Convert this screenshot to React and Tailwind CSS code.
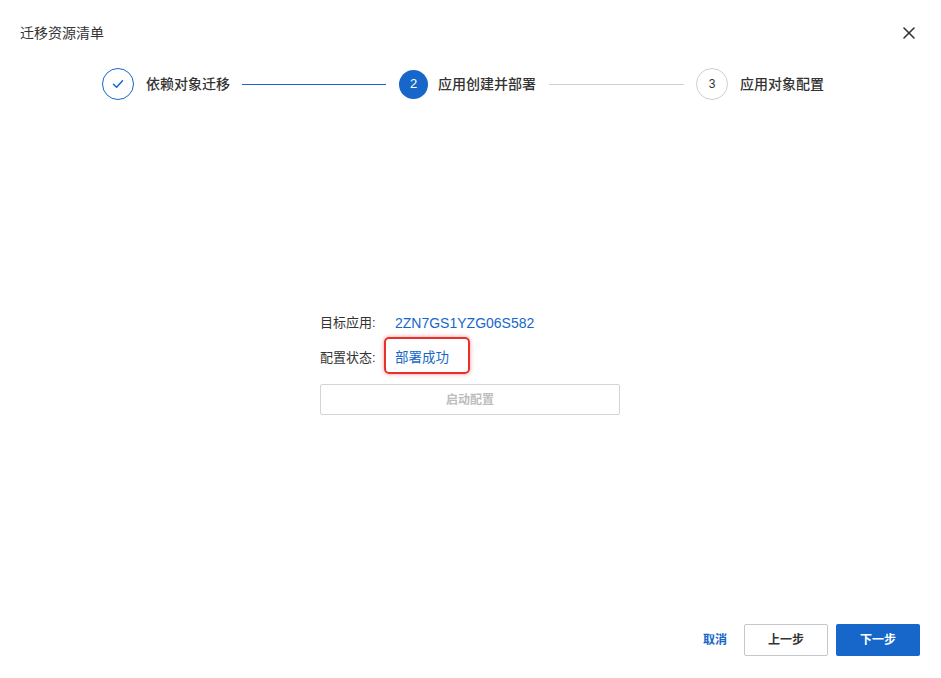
import React from "react";

const BLUE = "#1667c9";

export default function App() {
  return (
    <div
      className="w-[941px] h-[678px] bg-white flex flex-col text-[#333]"
      style={{ fontFamily: '"Liberation Sans", "Noto Sans CJK SC", sans-serif' }}
    >
      {/* header */}
      <div className="pt-[23px] pl-5 pr-[22px] flex items-center justify-between h-[43px]">
        <div className="text-[14px] leading-5">迁移资源清单</div>
        <svg width="20" height="20" viewBox="0 0 24 24" fill="none" stroke="#333" strokeWidth="1.9" strokeLinecap="round">
          <path d="M18 6 6 18" />
          <path d="M6 6l12 12" />
        </svg>
      </div>

      {/* steps */}
      <div className="mt-[25px] pl-[102px] flex items-center h-8">
        <div className="w-8 h-8 rounded-full border border-[#1667c9] flex items-center justify-center">
          <svg width="12" height="10" viewBox="0 0 12 10" fill="none" stroke={BLUE} strokeWidth="1.5" strokeLinecap="round" strokeLinejoin="round">
            <path d="M1.5 5.2 4.6 8.2 10.5 1.8" />
          </svg>
        </div>
        <div className="ml-3 text-[14px] font-medium leading-5">依赖对象迁移</div>
        <div className="ml-3 w-[144px] h-px bg-[#1667c9]" />
        <div className="ml-[13px] w-[29px] h-[29px] rounded-full bg-[#1667c9] flex items-center justify-center text-white text-[13px]">2</div>
        <div className="ml-[10px] text-[14px] font-medium leading-5">应用创建并部署</div>
        <div className="ml-[13px] w-[135px] h-px bg-[#cfcfcf]" />
        <div className="ml-3 w-8 h-8 rounded-full border border-[#cfcfcf] flex items-center justify-center text-[#333] text-[12px]">3</div>
        <div className="ml-3 text-[14px] font-medium leading-5">应用对象配置</div>
      </div>

      {/* content */}
      <div className="flex-1">
        <div className="mt-[213px] ml-[320px] w-[300px] text-[13px]">
          <div className="flex items-center h-5 leading-5">
            <div className="w-[75px]">目标应用:</div>
            <div className="text-[#1667c9] text-[14px]">2ZN7GS1YZG06S582</div>
          </div>
          <div className="flex items-center h-5 leading-5 mt-[15px]">
            <div className="w-[75px]">配置状态:</div>
            <div className="relative text-[#1667c9] text-[13.5px]">
              部署成功
              <div className="absolute left-[-11px] top-[-11px] w-[86px] h-[37px] border-2 border-[#e8312c] rounded-[5px] shadow-[0_0_4px_rgba(232,49,44,0.5)]" />
            </div>
          </div>
          <div className="mt-4 h-[31px] border border-[#d4d4d4] rounded-[2px] bg-white flex items-center justify-center text-[12px] font-bold text-[#bdbdbd]">
            启动配置
          </div>
        </div>
      </div>

      {/* footer */}
      <div className="flex items-center justify-end pr-[21px] pb-[22px] gap-2">
        <div className="text-[12px] font-bold text-[#1667c9] mr-[9px]">取消</div>
        <div className="w-[84px] h-8 border border-[#c4c7cc] rounded-[2px] flex items-center justify-center text-[12px] font-bold text-[#333]">上一步</div>
        <div className="w-[84px] h-8 bg-[#1667c9] rounded-[2px] flex items-center justify-center text-[12px] font-bold text-white">下一步</div>
      </div>
    </div>
  );
}
